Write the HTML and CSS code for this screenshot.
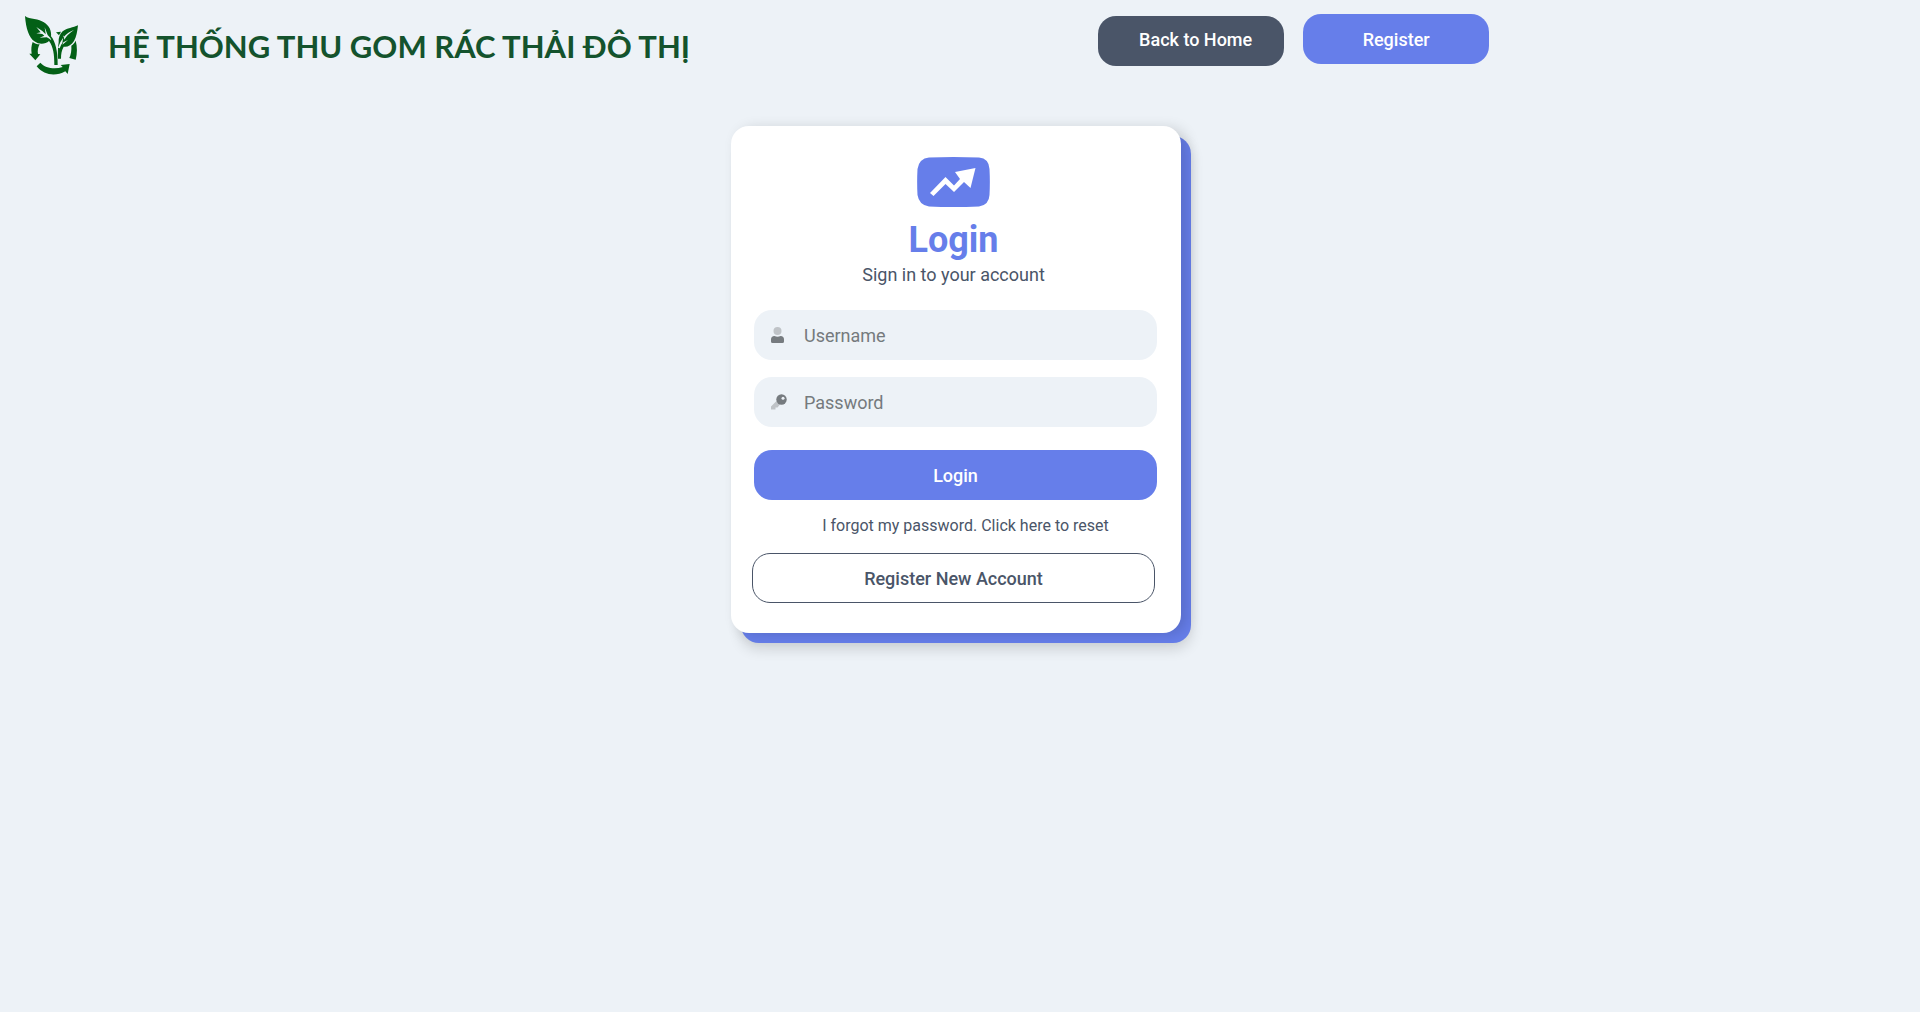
FILE: index.html
```html
<!DOCTYPE html>
<html lang="vi">
<head>
<meta charset="utf-8">
<meta name="viewport" content="width=device-width, initial-scale=1">
<title>Login</title>
<link rel="stylesheet" href="styles.css">
</head>
<body>
<header class="header">
  <div class="brand">
    <svg class="brand-logo" viewBox="42 30 165 183" aria-hidden="true">
      <path fill="#036016" d="M45 33C52 39 62 40 73 42C96 46 111 55 119 70C123 79 124 88 123 94C136 109 144 140 143 180L133 180C133 148 130 126 117 108C106 118 88 120 73 109C57 97 48 72 45 33Z"/>
      <path fill="#036016" d="M204 61C202 80 199 96 192 108C184 121 172 127 161 125C155 136 153 146 153 161L144 161C143 141 144 124 146 112C145 99 149 87 158 79C170 69 190 68 204 61Z"/>
      <path fill="#036016" d="M138 82L153 80L147 91Z"/>
      <path fill="#036016" d="M68 111C74 115 81 118 89 118C84 127 82 138 84 147L91 148L76 166L58 146L65 146C63 134 64 121 68 111Z"/>
      <path fill="#036016" d="M184 122C190 118 194 113 197 107C202 124 202 146 197 164L178 159C183 148 185 135 184 122Z"/>
      <path fill="#036016" d="M91 173C106 190 134 194 158 186L152 180L179 177L173 207L166 199C137 215 103 212 80 184Z"/>
      <path fill="#edf2f7" d="M79 66Q98 77 107 88L104 67L113 90Q122 98 124 106Q117 100 110 97L89 98L103 92L97 87L79 85L92 82Z"/>
      <path fill="#edf2f7" d="M192 75Q172 88 163 104L161 90L157 114Q152 120 149 130L144 128Q150 110 161 96Q174 81 192 75ZM160 112L174 105L157 119Z"/>
    </svg>
    <span class="brand-title">HỆ THỐNG THU GOM RÁC THẢI ĐÔ THỊ</span>
  </div>
  <nav class="header-nav">
    <button type="button" class="button button-dark">Back to Home</button>
    <button type="button" class="button button-primary">Register</button>
  </nav>
</header>
<main class="main">
  <section class="card">
    <div class="card-head">
      <svg class="card-logo" viewBox="0 0 73 50" aria-hidden="true">
        <path fill="#667eea" d="M12 .5Q36 -.5 62 .5Q72 1.500 72.500 12Q73.200 25 72.500 38Q72 48 62 49.500Q36 50.500 12 49.500Q2 48 .5 38Q-.2 25 .5 12Q2 1.500 12 .5Z"/>
        <path fill="#fff" d="M13 36L28.500 20L37 28.500L43 22L38 15L58.500 11L53.500 31L47 25L37 35L28.500 27L16.500 39Z"/>
      </svg>
      <h1 class="card-title">Login</h1>
      <p class="card-subtitle">Sign in to your account</p>
    </div>
    <form class="form">
      <label class="field">
        <svg class="field-icon" viewBox="0 0 16 16" aria-hidden="true">
          <circle cx="6.500" cy="4" r="4" fill="#bfc3c7"/>
          <path fill="#767b7f" d="M0 12.500Q0 9 3.500 9Q6.500 10.500 9.500 9Q13 9 13 12.500V14.500Q13 16 11.500 16H1.500Q0 16 0 14.500Z"/>
        </svg>
        <input class="field-input" type="text" placeholder="Username" aria-label="Username">
      </label>
      <label class="field">
        <svg class="field-icon" viewBox="0 0 16 16" aria-hidden="true">
          <path fill="#bfc3c7" d="M5.500 7L0 12.500V15.500H4.500V13.500H6.500L9 10.500Z"/>
          <circle cx="10.500" cy="5.500" r="5.200" fill="#767b7f"/>
          <circle cx="12" cy="4.200" r="1.500" fill="#edf2f7"/>
        </svg>
        <input class="field-input" type="password" placeholder="Password" aria-label="Password">
      </label>
      <button type="submit" class="button button-primary form-submit">Login</button>
      <a class="form-link" href="#">I forgot my password. Click here to reset</a>
    </form>
    <button type="button" class="button button-outline">Register New Account</button>
  </section>
</main>
</body>
</html>
```

FILE: styles.css
```css
* {
  box-sizing: border-box;
}

body {
  margin: 0;
  min-height: 100vh;
  background: #edf2f7;
  color: #4a5568;
  font-family: Roboto, "Liberation Sans", sans-serif;
  font-size: 18px;
}

.header {
  display: grid;
  grid-template-columns: 4fr 3fr;
}

.brand {
  display: flex;
  align-items: center;
  gap: 29px;
  padding: 15px 24px;
}

.brand-logo {
  width: 55px;
  height: 61px;
  flex: none;
}

.brand-title {
  color: #14532d;
  font-family: Lato, "Noto Sans", sans-serif;
  font-size: 31px;
  font-weight: 700;
  line-height: 40px;
  white-space: nowrap;
}

.header-nav {
  display: flex;
  align-items: flex-start;
  gap: 19px;
  padding: 14px 1px;
}

.button {
  height: 50px;
  padding: 0;
  border: 0;
  border-radius: 18px;
  font-family: inherit;
  font-size: 18px;
  font-weight: 500;
  cursor: pointer;
}

.header-nav .button {
  width: 186px;
}

.button-primary {
  background: #667eea;
  color: #fff;
}

.header-nav .button-dark {
  margin-top: 2px;
  padding: 0 0 4px 9px;
  background: #4a5568;
  color: #fff;
}

.button-outline {
  width: 403px;
  margin-top: 18px;
  border: 1px solid #4a5568;
  background: #fff;
  color: #4a5568;
}

.main {
  display: flex;
  justify-content: center;
  padding: 35px 8px 40px 0;
}

.card {
  width: 450px;
  padding: 31px 24px 30px 21px;
  border-radius: 18px;
  background: #fff;
  box-shadow:
    6px 2px 14px rgba(0, 0, 0, 0.14),
    10px 10px 0 #667eea,
    10px 16px 14px rgba(0, 0, 0, 0.14);
}

.card-head {
  display: flex;
  flex-direction: column;
  align-items: center;
  width: 403px;
}

.card-logo {
  width: 73px;
  height: 50px;
}

.card-title {
  margin: 12px 0 3px;
  color: #667eea;
  font-size: 36px;
  font-weight: 700;
  line-height: 42px;
}

.card-subtitle {
  margin: 0;
  line-height: 22px;
}

.form {
  display: flex;
  flex-direction: column;
  gap: 17px;
  margin: 24px 0 0 2px;
}

.field {
  display: flex;
  align-items: center;
  gap: 17px;
  height: 50px;
  padding: 0 17px;
  border-radius: 18px;
  background: #edf2f7;
}

.field-icon {
  width: 16px;
  height: 16px;
  flex: none;
}

.field-input {
  flex: 1;
  min-width: 0;
  padding: 0;
  border: 0;
  outline: 0;
  background: transparent;
  color: #4a5568;
  font-family: inherit;
  font-size: 18px;
}

.field-input::placeholder {
  color: #757a7d;
}

.form-submit {
  margin-top: 6px;
}

.form-link {
  padding-left: 20px;
  color: #4a5568;
  font-size: 16px;
  line-height: 18px;
  text-align: center;
  text-decoration: none;
}
```
